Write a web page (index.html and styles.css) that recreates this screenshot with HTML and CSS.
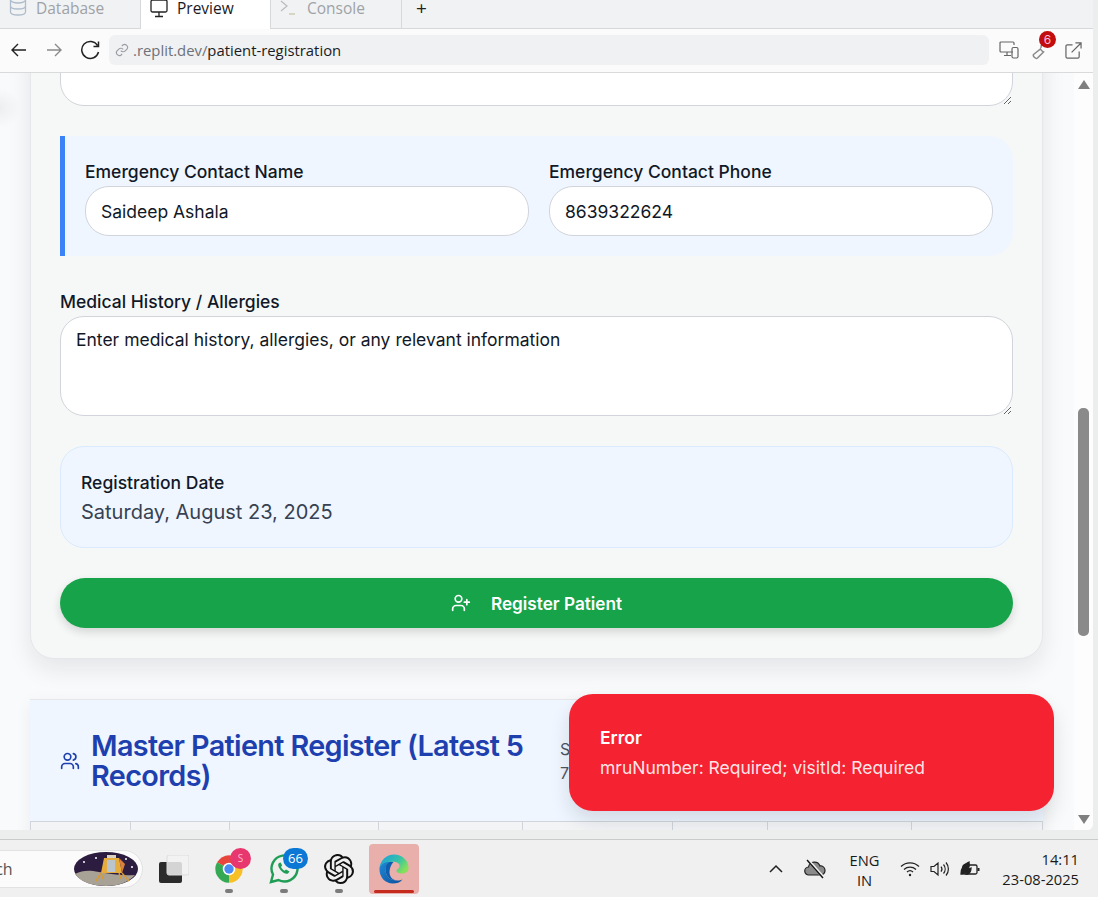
FILE: index.html
```html
<!DOCTYPE html>
<html lang="en">
<head>
  <meta charset="UTF-8" />
  <title>Patient Registration</title>
  <link rel="stylesheet" href="styles.css">
</head>
<body>
  <div class="window">
    <div class="tabs">
      <div class="tab tab-db">
        <svg class="tab-icon" width="18" height="20" viewBox="0 0 18 20" fill="none" stroke="#aebccb" stroke-width="1.3"><ellipse cx="9" cy="3" rx="7.5" ry="3"/><path d="M1.500 3v12c0 1.700 3.400 3 7.500 3s7.500-1.300 7.500-3V3M1.500 9c0 1.700 3.400 3 7.500 3s7.500-1.300 7.500-3"/></svg>
        <span>Database</span>
      </div>
      <div class="tab tab-active">
        <svg class="tab-icon" width="18" height="18" viewBox="0 0 18 18" fill="none" stroke="#222" stroke-width="1.300"><rect x="1" y="0" width="16" height="12" rx="1.500"/><path d="M9 12v4M5 16.500h8"/></svg>
        <span>Preview</span>
      </div>
      <div class="tab tab-console">
        <svg class="tab-icon" width="16" height="16" viewBox="0 0 16 16" fill="none" stroke-width="1.200"><path d="M1 1l6 5-6 5" stroke="#bbb"/><path d="M9 14h6" stroke="#c9c3a4"/></svg>
        <span>Console</span>
      </div>
      <div class="tab-add">+</div>
    </div>

    <div class="addressbar">
      <svg class="nav-btn" width="34" height="20" viewBox="0 0 34 20" fill="none" stroke="#222" stroke-width="1.400"><path d="M25 10H11M17 4l-6 6 6 6"/></svg>
      <svg class="nav-btn nav-forward" width="32" height="20" viewBox="0 0 32 20" fill="none" stroke="#8a8a8a" stroke-width="1.400"><path d="M9 10h14M17 4l6 6-6 6"/></svg>
      <svg class="nav-btn nav-reload" width="34" height="20" viewBox="0 0 34 20" fill="none" stroke="#222" stroke-width="1.500"><path d="M24.500 5.500A8.500 8.500 0 1 0 25.500 12M25.500 1.500v5h-5"/></svg>
      <div class="urlbox">
        <svg width="14" height="14" viewBox="0 0 24 24" fill="none" stroke="#9a9ea3" stroke-width="2"><path d="M10 13a5 5 0 0 0 7.500.5l3-3a5 5 0 0 0-7-7l-1.700 1.700"/><path d="M14 11a5 5 0 0 0-7.500-.5l-3 3a5 5 0 0 0 7 7l1.700-1.700"/></svg>
        <span class="url-host">.replit.dev/</span><span class="url-path">patient-registration</span>
      </div>
      <div class="bar-tools">
        <svg width="20" height="18" viewBox="0 0 20 18" fill="none" stroke="#666" stroke-width="1.200"><path d="M14 11H2a1 1 0 0 1-1-1V2a1 1 0 0 1 1-1h12a1 1 0 0 1 1 1v2M5 14.500h7M8 11v3.500"/><rect x="13" y="6.500" width="6" height="10.500" rx="1.500"/></svg>
        <div class="tool-wrench">
          <svg width="20" height="20" viewBox="0 0 20 20" fill="none" stroke="#8a8a8a" stroke-width="1.500"><path d="M1.500 14.500l7-5.500a6 6 0 0 0 3 3l-6 6c-1.500 1.300-5-1.500-4-3.500z"/><path d="M9 8a6 6 0 0 1 4-6"/></svg>
          <span class="badge-six">6</span>
        </div>
        <svg width="17" height="17" viewBox="0 0 18 18" fill="none" stroke="#666" stroke-width="1.300"><path d="M8 3H2.500A1.500 1.500 0 0 0 1 4.500v11A1.500 1.500 0 0 0 2.500 17h11a1.500 1.500 0 0 0 1.500-1.500V10M7 11L17 1M11 1h6v6"/></svg>
      </div>
    </div>

    <div class="viewport">
      <div class="page">
        <section class="card">
          <textarea class="field field-area" readonly></textarea>

          <div class="emergency">
            <div class="col">
              <label class="lbl">Emergency Contact Name</label>
              <input class="field" value="Saideep Ashala" readonly />
            </div>
            <div class="col">
              <label class="lbl">Emergency Contact Phone</label>
              <input class="field" value="8639322624" readonly />
            </div>
          </div>

          <div class="history">
            <label class="lbl">Medical History / Allergies</label>
            <textarea class="field field-area" readonly>Enter medical history, allergies, or any relevant information</textarea>
          </div>

          <div class="regdate">
            <div class="regdate-lbl">Registration Date</div>
            <div class="regdate-val">Saturday, August 23, 2025</div>
          </div>

          <button class="submit">
            <svg width="20" height="20" viewBox="0 0 24 24" fill="none" stroke="#fff" stroke-width="2" stroke-linecap="round"><path d="M16 21v-2a4 4 0 0 0-4-4H6a4 4 0 0 0-4 4v2"/><circle cx="9" cy="7" r="4"/><path d="M19 8v6M22 11h-6"/></svg>
            Register Patient
          </button>
        </section>

        <section class="register">
          <div class="register-head">
            <svg width="20" height="20" viewBox="0 0 24 24" fill="none" stroke="#1e40af" stroke-width="2" stroke-linecap="round"><path d="M16 21v-2a4 4 0 0 0-4-4H6a4 4 0 0 0-4 4v2"/><circle cx="9" cy="7" r="4"/><path d="M22 21v-2a4 4 0 0 0-3-3.900M16 3.100a4 4 0 0 1 0 7.800"/></svg>
            <h2>Master Patient Register (Latest 5 Records)</h2>
            <div class="register-meta">Showing<br>7 total</div>
          </div>
          <div class="register-cols">
            <div class="c1"></div><div class="c2"></div><div class="c3"></div><div class="c4"></div>
            <div class="c5"></div><div class="c6"></div><div class="c7"></div><div class="c8"></div>
          </div>
        </section>
      </div>

      <div class="scrollbar">
        <span class="arrow-up"></span>
        <span class="thumb"></span>
        <span class="arrow-down"></span>
      </div>

      <div class="toast">
        <div class="toast-title">Error</div>
        <div class="toast-msg">mruNumber: Required; visitId: Required</div>
      </div>
    </div>
  </div>

  <div class="taskbar">
    <div class="search">
      <span>Search</span>
      <svg class="search-art" width="64" height="34" viewBox="0 0 64 34">
        <ellipse cx="32" cy="17" rx="32" ry="17" fill="#2c1c3f"/>
        <path d="M1 22c8-4 14-4 24-2 12 2 24 4 36 3-7 8-18 11-29 11S7 31 1 22z" fill="#a8a195"/>
        <circle cx="10" cy="10" r="1" fill="#fff"/><circle cx="22" cy="6" r="1" fill="#fff"/><circle cx="52" cy="7" r="1" fill="#fff"/><circle cx="58" cy="15" r="1" fill="#fff"/>
        <path d="M27 21l-5 8M48 21l7 8M30 21l-2 6M45 21l2 6" stroke="#d99a33" stroke-width="1.500" fill="none"/>
        <path d="M30 6h15l3 15H27z" fill="#e6ad3e"/>
        <rect x="33" y="8" width="8" height="12" fill="#b9c4cc"/>
        <path d="M45 6l6 6-3 9z" fill="#d9803a"/>
        <rect x="33" y="3" width="9" height="3" fill="#d9d2c2"/>
      </svg>
    </div>

    <div class="task-app">
      <svg width="30" height="28" viewBox="0 0 30 28"><rect x="0" y="7" width="23" height="21" rx="2" fill="#2b2b2b"/><rect x="8" y="0" width="22" height="20" rx="2" fill="#f2f2f2" fill-opacity="0.85" stroke="#dcdcdc"/></svg>
    </div>

    <div class="task-app has-dot">
      <svg width="30" height="30" viewBox="0 0 48 48">
        <path d="M24 24L5 13A22 22 0 0 1 43 13z" fill="#e8453c"/>
        <path d="M24 24L43 13A22 22 0 0 1 24 46z" fill="#f6c026"/>
        <path d="M24 24L24 46A22 22 0 0 1 5 13z" fill="#34a853"/>
        <circle cx="24" cy="24" r="10" fill="#fff"/><circle cx="24" cy="24" r="7.500" fill="#4a8af4"/>
      </svg>
      <span class="badge-pink">S</span>
    </div>

    <div class="task-app has-dot">
      <svg width="30" height="30" viewBox="0 0 30 30" fill="none">
        <path d="M2 28l2-7.500A13 13 0 1 1 9.500 26z" stroke="#1f9d55" stroke-width="2.400"/>
        <path d="M10 9c-1.500 1.500-1 4 1.500 7s5.500 4.500 7.500 3.500l1.500-2-3.500-2-1.500 1.200c-1.500-.7-3-2.500-3.500-4l1.200-1.200-1.500-3z" fill="#1f9d55"/>
      </svg>
      <span class="badge-blue">66</span>
    </div>

    <div class="task-app has-dot">
      <svg width="30" height="30" viewBox="0 0 24 24" fill="#111"><path d="M22.2819 9.8211a5.9847 5.9847 0 0 0-.5157-4.9108 6.0462 6.0462 0 0 0-6.5098-2.9A6.0651 6.0651 0 0 0 4.9807 4.1818a5.9847 5.9847 0 0 0-3.9977 2.9 6.0462 6.0462 0 0 0 .7427 7.0966 5.98 5.98 0 0 0 .511 4.9107 6.051 6.051 0 0 0 6.5146 2.9001A5.9847 5.9847 0 0 0 13.2599 24a6.0557 6.0557 0 0 0 5.7718-4.2058 5.9894 5.9894 0 0 0 3.9977-2.9001 6.0557 6.0557 0 0 0-.7475-7.0729zm-9.022 12.6081a4.4755 4.4755 0 0 1-2.8764-1.0408l.1419-.0804 4.7783-2.7582a.7948.7948 0 0 0 .3927-.6813v-6.7369l2.02 1.1686a.071.071 0 0 1 .038.052v5.5826a4.504 4.504 0 0 1-4.4945 4.4944zm-9.6607-4.1254a4.4708 4.4708 0 0 1-.5346-3.0137l.142.0852 4.783 2.7582a.7712.7712 0 0 0 .7806 0l5.8428-3.3685v2.3324a.0804.0804 0 0 1-.0332.0615L9.74 19.9502a4.4992 4.4992 0 0 1-6.1408-1.6464zM2.3408 7.8956a4.485 4.485 0 0 1 2.3655-1.9728V11.6a.7664.7664 0 0 0 .3879.6765l5.8144 3.3543-2.0201 1.1685a.0757.0757 0 0 1-.071 0l-4.8303-2.7865A4.504 4.504 0 0 1 2.3408 7.872zm16.5963 3.8558L13.1038 8.364 15.1192 7.2a.0757.0757 0 0 1 .071 0l4.8303 2.7913a4.4944 4.4944 0 0 1-.6765 8.1042v-5.6772a.79.79 0 0 0-.407-.667zm2.0107-3.0231l-.142-.0852-4.7735-2.7818a.7759.7759 0 0 0-.7854 0L9.409 9.2297V6.8974a.0662.0662 0 0 1 .0284-.0615l4.8303-2.7866a4.4992 4.4992 0 0 1 6.6802 4.66zM8.3065 12.863l-2.02-1.1638a.0804.0804 0 0 1-.038-.0567V6.0742a4.4992 4.4992 0 0 1 7.3757-3.4537l-.142.0805L8.704 5.459a.7948.7948 0 0 0-.3927.6813zm1.0976-2.3654l2.602-1.4998 2.6069 1.4998v2.9994l-2.5974 1.4997-2.6067-1.4997Z"/></svg>
    </div>

    <div class="task-app task-active">
      <svg width="30" height="30" viewBox="0 0 30 30">
        <defs>
          <linearGradient id="edgeTop" x1="0" y1="0" x2="1" y2="0.600"><stop offset="0" stop-color="#1b9de2"/><stop offset="0.600" stop-color="#35c1a8"/><stop offset="1" stop-color="#86e05a"/></linearGradient>
          <linearGradient id="edgeLow" x1="0" y1="0" x2="1" y2="1"><stop offset="0" stop-color="#1f8ad6"/><stop offset="1" stop-color="#0b4f9e"/></linearGradient>
        </defs>
        <path d="M0.500 14C1.500 6 7.500 0.500 15 0.500c8 0 14.500 6 14.500 13 0 4-3 6-7 6-3 0-5-1-5-2.500 0-2 3-2 3-5 0-3-4-5-8-4C6 9 2 11 0.500 14z" fill="url(#edgeTop)"/>
        <path d="M0.500 14C2 10 6 8 10 8c-2.500 2-4 5-3.500 9 .7 6 6 10 12 9.500 2 0 4-.5 5-1-2.500 3-6 4-9.500 4C6 29.500 0 23 .5 14z" fill="url(#edgeLow)"/>
        <path d="M10 8c-3 2-4 5-3.500 9 .7 6 6 10 12 9.500-5 0-8-4-8-8.500 0-4 2-8 4-10z" fill="#0b5fb0"/>
      </svg>
      <span class="task-underline"></span>
    </div>

    <div class="tray">
      <div class="tray-item tray-chevron">
        <svg width="16" height="10" viewBox="0 0 16 10" fill="none" stroke="#222" stroke-width="1.500"><path d="M2 8l6-6 6 6"/></svg>
      </div>
      <div class="tray-item tray-cloud">
        <svg width="22" height="20" viewBox="0 0 22 20"><path d="M5 16a4 4 0 0 1-.5-8A6 6 0 0 1 16 7a4.500 4.500 0 0 1 1 9z" fill="#8b8b8b" stroke="#222" stroke-width="1.200"/><path d="M4 1l15 17" stroke="#f0f0f0" stroke-width="3"/><path d="M3 1l16 18" stroke="#111" stroke-width="1.400"/></svg>
      </div>
      <div class="tray-lang">ENG<br>IN</div>
      <div class="tray-item tray-icon">
        <svg width="20" height="16" viewBox="0 0 20 16" fill="none" stroke="#222" stroke-width="1.300"><path d="M1 5.500a13 13 0 0 1 18 0M4 8.500a9 9 0 0 1 12 0M7 11a4.500 4.500 0 0 1 6 0"/><circle cx="10" cy="14" r="1.200" fill="#222" stroke="none"/></svg>
      </div>
      <div class="tray-item tray-icon">
        <svg width="20" height="18" viewBox="0 0 20 18" fill="none" stroke="#222" stroke-width="1.200"><path d="M1 6.500v5h3l4 3.500V3L4 6.500zM11 6.500a4 4 0 0 1 0 5M13.500 4.500a7 7 0 0 1 0 9M16 2.500a10 10 0 0 1 0 13"/></svg>
      </div>
      <div class="tray-item tray-icon">
        <svg width="20" height="18" viewBox="0 0 20 18" fill="none" stroke="#222" stroke-width="1.300"><rect x="3" y="5" width="14" height="9" rx="1.500"/><path d="M18.500 8v3" stroke-width="2"/><path d="M1 14c0-6 3-10 8-12 1 5-1 10-6 12z" fill="#222"/><path d="M6 14c0-3 2-5 5-6 0 3-1 5-3 6z" fill="#222"/></svg>
      </div>
      <div class="clock">14:11<br>23-08-2025</div>
    </div>
  </div>
</body>
</html>
```

FILE: styles.css
```css
* {
  box-sizing: border-box;
}
html, body {
  height: 100%;
}
body {
  margin: 0;
  height: 897px;
  overflow: hidden;
  display: flex;
  flex-direction: column;
  background: #eceded;
  font-family: Inter, "Liberation Sans", sans-serif;
  color: #111827;
}
.window {
  width: 1093px;
  height: 830px;
  display: flex;
  flex-direction: column;
  flex-shrink: 0;
  background: #fafafa;
  border-bottom-right-radius: 6px;
  overflow: hidden;
}

/* tabs */
.tabs {
  height: 29px;
  flex-shrink: 0;
  display: flex;
  background: #f1f2f3;
  border-bottom: 1px solid #d6d8da;
  font-family: "Open Sans", sans-serif;
  font-size: 15.5px;
  color: #9ea2a7;
}
.tab {
  height: 28px;
  width: 131px;
  display: flex;
  align-items: flex-start;
  gap: 9px;
  padding-left: 9px;
  border-right: 1px solid #d6d8da;
  line-height: 17px;
  white-space: nowrap;
}
.tab-db {
  width: 140px;
  border-right: none;
}
.tab-active {
  height: 29px;
  background: #fff;
  color: #1b1b1f;
  border-left: 1px solid #d6d8da;
}
.tab-console {
  gap: 11px;
}
.tab-db .tab-icon {
  margin-top: -3px;
}
.tab-add {
  margin-left: 14px;
  font-size: 19px;
  line-height: 17px;
  color: #222;
}

/* address bar */
.addressbar {
  height: 44px;
  flex-shrink: 0;
  display: flex;
  align-items: center;
  padding: 0 0 1px 1px;
  background: #fbfbfb;
  border-bottom: 1px solid #d9dadc;
}
.nav-btn {
  flex-shrink: 0;
}
.nav-forward, .nav-reload {
  margin-left: 3px;
}
.urlbox {
  margin-left: 2px;
  width: 880px;
  height: 30px;
  display: flex;
  align-items: center;
  padding-left: 6px;
  border-radius: 6px;
  background: #eff1f3;
  font-family: "Open Sans", sans-serif;
  font-size: 14.85px;
}
.urlbox svg {
  margin-right: 4px;
}
.url-host {
  color: #6d7278;
}
.url-path {
  color: #1b1b1f;
}
.bar-tools {
  display: flex;
  align-items: center;
  gap: 13px;
  margin-left: 10px;
}
.tool-wrench {
  position: relative;
  height: 20px;
}
.badge-six {
  position: absolute;
  left: 7px;
  top: -9px;
  width: 17px;
  height: 17px;
  border-radius: 50%;
  background: #c10d0d;
  color: #fbd;
  font-size: 12px;
  line-height: 17px;
  text-align: center;
}

/* page area */
.viewport {
  position: relative;
  flex: 1;
  display: flex;
  overflow: hidden;
  background: #f9fafb;
}
.page {
  width: 1074px;
  padding-left: 30px;
  overflow: hidden;
  background: radial-gradient(circle at 0 35px, #eceef0 0, #f9fafb 20px) no-repeat;
}
.card {
  width: 1013px;
  margin-top: -97px;
  padding: 29px 29px 30px;
  background: #f6f8f7;
  border: 1px solid #e5e7eb;
  border-radius: 24px;
  box-shadow: 0 10px 24px rgba(15, 23, 42, 0.09);
}
.field {
  display: block;
  width: 100%;
  height: 50px;
  padding: 0 15px;
  border: 1px solid #d1d5db;
  border-radius: 24px;
  background: #fff;
  font-family: inherit;
  font-size: 17.5px;
  color: #111827;
  outline: none;
}
.field-area {
  height: 100px;
  padding: 12px 15px;
  line-height: 22px;
}
.lbl {
  display: block;
  margin-bottom: 2px;
  font-size: 17.5px;
  font-weight: 500;
  line-height: 24px;
}
.emergency {
  margin-top: 30px;
  display: flex;
  gap: 20px;
  padding: 24px 20px 20px;
  border-left: 5px solid #3b82f6;
  border-radius: 0 24px 24px 0;
  background: #eff6ff;
}
.col {
  flex: 1;
}
.history {
  margin-top: 34px;
}
.regdate {
  margin-top: 30px;
  height: 102px;
  padding: 24px 20px;
  border: 1px solid #dbeafe;
  border-radius: 24px;
  background: #eff6ff;
}
.regdate-lbl {
  font-size: 17.5px;
  font-weight: 500;
  line-height: 24px;
}
.regdate-val {
  margin-top: 3px;
  font-size: 20px;
  line-height: 28px;
  color: #374151;
}
.submit {
  margin-top: 30px;
  width: 100%;
  height: 50px;
  display: flex;
  align-items: center;
  justify-content: center;
  gap: 20px;
  border: none;
  border-radius: 25px;
  background: #16a34a;
  box-shadow: 0 4px 10px rgba(0, 0, 0, 0.14);
  color: #fff;
  font-family: inherit;
  font-size: 17.2px;
  font-weight: 600;
}
.register {
  width: 1013px;
  margin-top: 40px;
  border-top: 1px solid #e5e7eb;
  background: #eff6ff;
  box-shadow: 0 4px 16px rgba(15, 23, 42, 0.06);
}
.register-head {
  height: 122px;
  display: flex;
  align-items: center;
  gap: 11px;
  padding: 1px 0 0 30px;
  border-bottom: 1px solid #d1d5db;
}
.register-head svg {
  flex-shrink: 0;
}
.register-head h2 {
  width: 458px;
  margin: 0;
  font-size: 28.8px;
  font-weight: 600;
  line-height: 30px;
  letter-spacing: -0.65px;
  color: #1e40af;
}
.register-meta {
  font-size: 16px;
  line-height: 24px;
  color: #4b5563;
}
.register-cols {
  height: 20px;
  display: grid;
  grid-template-columns: 100px 99px 149px 144px 150px 95px 144px 132px;
  background: #f3f4f6;
}
.register-cols div {
  border-left: 1px solid #d1d5db;
}
.register-cols .c8 {
  border-right: 1px solid #d1d5db;
}
.scrollbar {
  width: 19px;
  display: flex;
  flex-direction: column;
  align-items: center;
  background: #fdfdfd;
}
.arrow-up, .arrow-down {
  width: 0;
  height: 0;
  border-left: 6px solid transparent;
  border-right: 6px solid transparent;
}
.arrow-up {
  margin-top: 7px;
  border-bottom: 9px solid #808080;
}
.thumb {
  width: 11px;
  height: 228px;
  margin-top: 319px;
  margin-bottom: 179px;
  border-radius: 5px;
  background: #8a8a8a;
}
.arrow-down {
  border-top: 9px solid #808080;
}
.toast {
  position: absolute;
  left: 569px;
  top: 621px;
  width: 485px;
  height: 117px;
  padding: 32px 31px;
  border-radius: 24px;
  background: #f52231;
  box-shadow: 0 10px 20px rgba(15, 23, 42, 0.12);
  color: #fff;
}
.toast-title {
  font-size: 17.5px;
  font-weight: 600;
  line-height: 24px;
}
.toast-msg {
  margin-top: 6px;
  font-size: 17.5px;
  line-height: 24px;
  color: rgba(255, 255, 255, 0.9);
}

/* windows taskbar */
.taskbar {
  margin-top: 9px;
  flex: 1;
  display: flex;
  align-items: center;
  gap: 5px;
  background: #f0f0f0;
  border-top: 1px solid #c9cacb;
  font-family: "Open Sans", sans-serif;
  color: #1a1a1a;
  position: relative;
}
.search {
  flex-shrink: 0;
  width: 203px;
  height: 38px;
  margin-left: -60px;
  margin-right: 1px;
  display: flex;
  align-items: center;
  justify-content: space-between;
  padding: 0 4px 0 21px;
  border: 1px solid #e2e2e2;
  border-radius: 19px;
  background: #fbfbfb;
  font-size: 16px;
  color: #555;
}
.task-app {
  position: relative;
  flex-shrink: 0;
  width: 50px;
  height: 50px;
  display: flex;
  align-items: center;
  justify-content: center;
}
.has-dot::after {
  content: "";
  position: absolute;
  left: 21px;
  bottom: 1px;
  width: 8px;
  height: 4px;
  border-radius: 2px;
  background: #7b7b7b;
}
.task-active {
  border-radius: 4px;
  background: #e9afaa;
}
.task-underline {
  position: absolute;
  left: 5px;
  bottom: 1px;
  width: 40px;
  height: 3px;
  border-radius: 2px;
  background: #c42b1c;
}
.badge-pink {
  position: absolute;
  left: 26px;
  top: 4px;
  width: 21px;
  height: 21px;
  border-radius: 50%;
  background: #e8376f;
  color: #fbc;
  font-size: 10px;
  line-height: 21px;
  text-align: center;
}
.badge-blue {
  position: absolute;
  left: 24px;
  top: 4px;
  width: 25px;
  height: 21px;
  border-radius: 11px;
  background: #0a78d4;
  color: #fff;
  font-size: 13px;
  line-height: 21px;
  text-align: center;
}
.tray {
  margin-left: 332px;
  flex: 1;
  display: flex;
  align-items: center;
  font-size: 14.7px;
  line-height: 20px;
}
.tray-item {
  display: flex;
  justify-content: center;
}
.tray-chevron {
  width: 40px;
}
.tray-cloud {
  width: 38px;
}
.tray-lang {
  width: 61px;
  margin-top: 2px;
  text-align: center;
}
.tray-icon {
  width: 30px;
}
.clock {
  margin-left: auto;
  padding-right: 19px;
  text-align: right;
}
```
